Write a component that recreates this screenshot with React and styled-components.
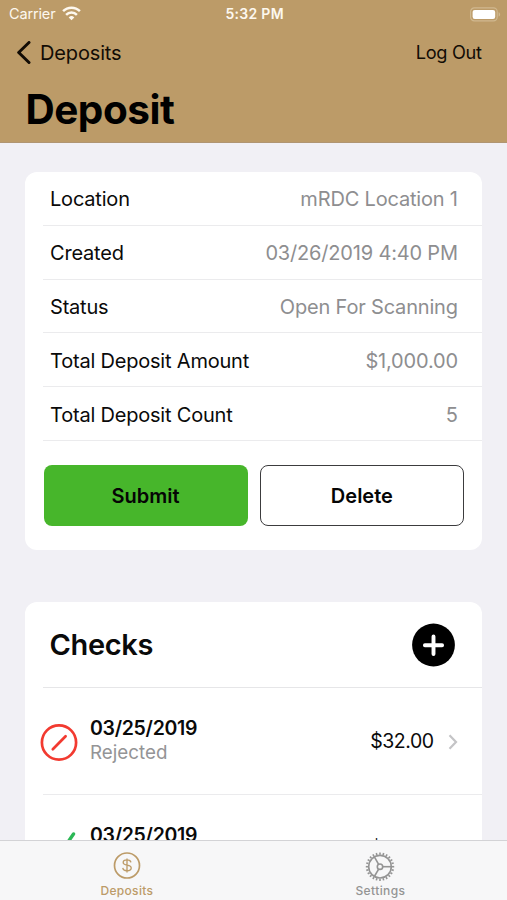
import React from 'react';
import styled, { createGlobalStyle } from 'styled-components';

const GlobalStyle = createGlobalStyle`
  * {
    box-sizing: border-box;
  }
  body {
    margin: 0;
    background-color: #f1f0f5;
    font-family: Inter, "Liberation Sans", sans-serif;
    color: #0a0a0a;
  }
  svg {
    display: block;
    flex-shrink: 0;
  }
`;

const Screen = styled.div`
  display: flex;
  flex-direction: column;
  width: 507px;
  height: 900px;
  overflow: hidden;
`;

const Header = styled.header`
  display: flex;
  flex-direction: column;
  height: 143px;
  flex-shrink: 0;
  background-color: #bc9b68;
  border-bottom: 1px solid #b09572;
`;

const Text = styled.span`
  font-size: ${props => props.$size || 20}px;
  font-weight: ${props => props.$weight || 400};
  letter-spacing: ${props => props.$track || 0}px;
  margin-right: ${props => -(props.$track || 0)}px;
  color: ${props => props.$color || 'inherit'};
  line-height: ${props => props.$leading || 1.2};
  white-space: nowrap;
`;

const StatusBar = styled.div`
  display: grid;
  grid-template-columns: 1fr auto 1fr;
  align-items: center;
  height: 27px;
  padding: 1px 7px 0 9px;
  color: #fdf8ef;
`;

const Signal = styled.div`
  display: flex;
  align-items: center;
  gap: 6px;
`;

const Power = styled.div`
  display: flex;
  justify-content: flex-end;
  margin-right: -1px;
`;

const NavBar = styled.nav`
  display: flex;
  justify-content: space-between;
  align-items: center;
  height: 50px;
  padding: 1px 25px 0 15.5px;
`;

const BackLink = styled.div`
  display: flex;
  align-items: center;
  gap: 9.5px;
`;

const Title = styled.h1`
  margin: 8px 0 0 25.5px;
  font-size: 40.5px;
  font-weight: 700;
  line-height: 49px;
  letter-spacing: -0.5px;
  color: #000;
`;

const Content = styled.main`
  flex: 1;
  min-height: 0;
  overflow: hidden;
  padding: 29px 25px 0;
`;

const Card = styled.section`
  padding-left: 18px;
  margin-bottom: 52px;
  border-radius: 12px;
  background-color: #fff;
`;

const DetailRow = styled.div`
  display: flex;
  justify-content: space-between;
  align-items: center;
  height: 53.8px;
  padding: 2px 24px 0 7px;
  border-bottom: 1px solid #ebebed;
`;

const Actions = styled.div`
  display: grid;
  grid-template-columns: 1fr 1fr;
  gap: 12px;
  padding: 24px 18px 24px 0.5px;
`;

const Button = styled.button`
  height: 61.5px;
  padding: 1px 0 0;
  border: ${props => props.$primary ? 'none' : '1.3px solid #3c3c3e'};
  border-radius: 8px;
  background-color: ${props => props.$primary ? '#47b62b' : '#fff'};
  color: #050505;
  font-family: inherit;
`;

const ChecksHeader = styled.div`
  display: flex;
  justify-content: space-between;
  align-items: center;
  height: 86px;
  padding: 1px 27px 0 6.5px;
  border-bottom: 1px solid #e6e6e8;
`;

const CheckRow = styled.div`
  display: flex;
  align-items: center;
  height: 106px;
  margin-left: -3px;
  padding: 1px 24px 0 0;
`;

const Divider = styled.div`
  height: 1px;
  background-color: #ebebed;
`;

const CheckInfo = styled.div`
  display: flex;
  flex: 1;
  flex-direction: column;
  align-items: flex-start;
  padding: 0 0 3px 12px;
`;

const Amount = styled.div`
  display: flex;
  align-items: center;
  gap: 14px;
`;

const TabBar = styled.footer`
  display: grid;
  grid-template-columns: 1fr 1fr;
  flex-shrink: 0;
  height: 60px;
  border-top: 1px solid #d3d3d6;
  background-color: #f7f7f8;
`;

const Tab = styled.div`
  display: flex;
  flex-direction: column;
  align-items: center;
  padding-top: 9px;
  gap: 2px;
  color: ${props => props.$active ? '#bc9b68' : '#949494'};
`;

const WifiIcon = () => (
  <svg width="19" height="15" viewBox="0 0 19 15" fill="none" stroke="currentColor" strokeWidth="2.5">
    <path d="M1.1 5.1a11.9 11.9 0 0 1 16.8 0" />
    <path d="M4.1 8.8a7.6 7.6 0 0 1 10.8 0" />
    <path d="M9.5 14.2 6.7 11.4a4 4 0 0 1 5.6 0z" fill="currentColor" stroke="none" />
  </svg>
);

const BatteryIcon = () => (
  <svg width="31" height="15" viewBox="0 0 31 15">
    <rect x="0.6" y="0.9" width="26.6" height="13" rx="3.8" fill="none" stroke="#d0b88f" strokeWidth="1.2" />
    <rect x="2.6" y="2.9" width="22.6" height="9" rx="2.2" fill="#fff" />
    <path d="M28.6 5.2c2 .7 2 3.7 0 4.4z" fill="#d0b88f" />
  </svg>
);

const BackIcon = () => (
  <svg width="15" height="24" viewBox="0 0 15 24" fill="none" stroke="#120c05" strokeWidth="3" strokeLinecap="round" strokeLinejoin="round">
    <path d="M13 1.5 2.7 11.5 13 21.5" />
  </svg>
);

const PlusIcon = () => (
  <svg width="43" height="44" viewBox="0 0 43 44">
    <circle cx="21.5" cy="22" r="21.4" fill="#000" />
    <path d="M21.5 13.4v17.6M12.9 22.2h17.2" stroke="#fff" strokeWidth="3.9" strokeLinecap="round" />
  </svg>
);

const RejectedIcon = () => (
  <svg width="38" height="38" viewBox="0 0 38 38" fill="none" stroke="#f23a30" strokeWidth="2.7" strokeLinecap="round">
    <circle cx="19" cy="19.5" r="17.1" />
    <path d="M12.8 26.3 25.6 13.2" />
  </svg>
);

const AcceptedIcon = () => (
  <svg width="38" height="38" viewBox="0 0 38 38" fill="none" stroke="#2cb856" strokeWidth="3.4" strokeLinecap="round" strokeLinejoin="round">
    <path d="M4.5 22 13 34 33.5 4" />
  </svg>
);

const DisclosureIcon = () => (
  <svg width="10" height="16" viewBox="0 0 10 16" fill="none" stroke="#c4c4c6" strokeWidth="2.2">
    <path d="M1.5 1.3 8 8 1.5 14.7" />
  </svg>
);

const CoinIcon = () => (
  <svg width="28" height="32" viewBox="0 0 28 32" fill="none" stroke="currentColor" strokeWidth="1.7">
    <circle cx="14" cy="15.5" r="12.5" />
    <path d="M14 8.6v13.8M17.9 12.4c-.2-1.6-1.7-2.5-3.9-2.5s-3.8.9-3.8 2.6c0 3.8 8 1.6 8 5.4 0 1.8-1.8 2.8-4.2 2.8s-4-.9-4.2-2.8" strokeWidth="1.35" />
  </svg>
);

const teeth = Array.from({ length: 24 }, (_, i) => i * 15);

const GearIcon = () => (
  <svg width="30" height="32" viewBox="0 0 30 32" fill="none" stroke="currentColor" strokeWidth="1.6">
    <g transform="translate(15 16.7)">
      <circle r="11.3" />
      <circle r="2.7" />
      {[0, 120, 240].map(angle => (
        <path key={angle} d="M2.7 0H11.3" transform={`rotate(${angle})`} />
      ))}
      {teeth.map(angle => (
        <path key={angle} d="M12 0H14.2" transform={`rotate(${angle})`} />
      ))}
    </g>
  </svg>
);

const details = [
  { label: 'Location', value: 'mRDC Location 1' },
  { label: 'Created', value: '03/26/2019 4:40 PM' },
  { label: 'Status', value: 'Open For Scanning' },
  { label: 'Total Deposit Amount', value: '$1,000.00' },
  { label: 'Total Deposit Count', value: '5' },
];

const checks = [
  { date: '03/25/2019', status: 'Rejected', amount: '$32.00', icon: <RejectedIcon /> },
  { date: '03/25/2019', status: 'Accepted', amount: '$32.00', icon: <AcceptedIcon /> },
];

export default function App() {
  return (
    <Screen>
      <GlobalStyle />
      <Header>
        <StatusBar>
          <Signal>
            <Text $size={14.5} $track={-0.15}>Carrier</Text>
            <WifiIcon />
          </Signal>
          <Text $size={14} $weight={600} $track={0.3}>5:32 PM</Text>
          <Power><BatteryIcon /></Power>
        </StatusBar>
        <NavBar>
          <BackLink>
            <BackIcon />
            <Text $track={-0.15} $color="#120c05">Deposits</Text>
          </BackLink>
          <Text $size={18.2} $track={-0.3} $color="#120c05">Log Out</Text>
        </NavBar>
        <Title>Deposit</Title>
      </Header>
      <Content>
        <Card>
          {details.map(({ label, value }) => (
            <DetailRow key={label}>
              <Text $track={-0.2}>{label}</Text>
              <Text $track={-0.18} $color="#8e8e90">{value}</Text>
            </DetailRow>
          ))}
          <Actions>
            <Button $primary><Text $weight={600}>Submit</Text></Button>
            <Button><Text $weight={600}>Delete</Text></Button>
          </Actions>
        </Card>
        <Card>
          <ChecksHeader>
            <Text $size={29} $weight={600} $track={-0.35}>Checks</Text>
            <PlusIcon />
          </ChecksHeader>
          {checks.map((check, index) => (
            <React.Fragment key={index}>
              {index > 0 && <Divider />}
              <CheckRow>
                {check.icon}
                <CheckInfo>
                  <Text $size={19.5} $leading="25px" $weight={600} $track={-0.3}>{check.date}</Text>
                  <Text $size={18.8} $leading="23px" $color="#949496">{check.status}</Text>
                </CheckInfo>
                <Amount>
                  <Text $size={19.5} $track={-0.5}>{check.amount}</Text>
                  <DisclosureIcon />
                </Amount>
              </CheckRow>
            </React.Fragment>
          ))}
        </Card>
      </Content>
      <TabBar>
        <Tab $active>
          <CoinIcon />
          <Text $size={12} $weight={500} $track={0.3}>Deposits</Text>
        </Tab>
        <Tab>
          <GearIcon />
          <Text $size={12} $weight={500} $track={0.4}>Settings</Text>
        </Tab>
      </TabBar>
    </Screen>
  );
}
